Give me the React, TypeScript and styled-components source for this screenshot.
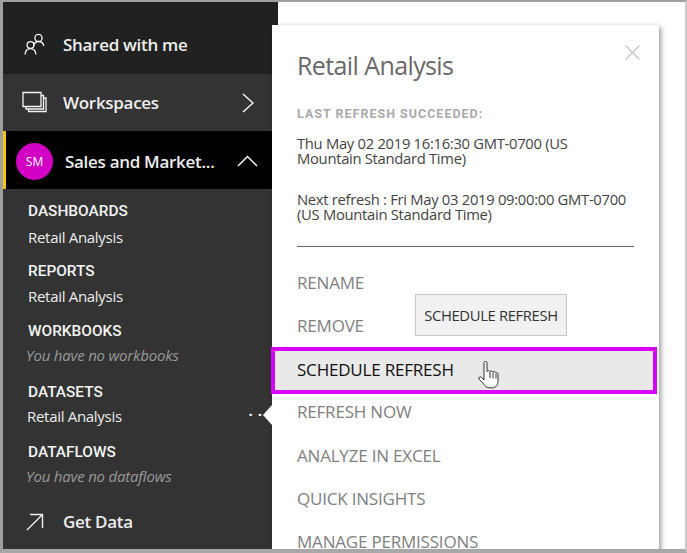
import React from "react";
import styled, { createGlobalStyle } from "styled-components";

const Global = createGlobalStyle`
  html, body { margin: 0; padding: 0; background: #fff; }
  * { box-sizing: border-box; }
  body { font-family: "Open Sans", "Noto Sans", sans-serif; }
`;

const Frame = styled.div`
  position: relative;
  width: 687px;
  height: 553px;
  display: flex;
  overflow: hidden;
  background: #fff;
  border-top: 2px solid #a0a0a0;
  border-left: 3px solid #a0a0a0;
  border-right: 2px solid #c8c8c8;
  border-bottom: 4px solid #a8a8a8;
`;

const Sidebar = styled.nav`
  width: 275px;
  flex: none;
  display: flex;
  flex-direction: column;
  background: #333;
  color: #fff;
`;

const NavRow = styled.div<{ $bg: string; $h: number; $pt?: number }>`
  height: ${(p) => p.$h}px;
  background: ${(p) => p.$bg};
  display: flex;
  align-items: center;
  padding-left: 19px;
  padding-top: ${(p) => p.$pt ?? 0}px;
  flex: none;
`;

const ActiveRow = styled(NavRow)`
  border-left: 3px solid #f2c811;
  padding-left: 10px;
`;

const NavIcon = styled.svg`
  width: 26px;
  height: 26px;
  flex: none;
  margin-right: 15px;
  fill: none;
  stroke: #f4f4f4;
  stroke-width: 1.3;
`;

const NavLabel = styled.span`
  font-size: 17px;
  font-weight: 600;
  color: #eee;
  letter-spacing: -0.3px;
  flex: 1;
`;

const Avatar = styled.span`
  width: 37px;
  height: 37px;
  border-radius: 50%;
  background: #d200c4;
  color: #fff;
  font-size: 12px;
  display: flex;
  align-items: center;
  justify-content: center;
  margin-right: 12px;
  flex: none;
`;

const Chevron = styled.svg<{ $mr: number }>`
  flex: none;
  fill: none;
  stroke: #f4f4f4;
  stroke-width: 1.5;
  margin-right: ${(p) => p.$mr}px;
`;

const Sections = styled.div`
  flex: 1;
  display: flex;
  flex-direction: column;
  padding: 11px 0 0 25px;
`;

const Section = styled.div<{ $h: number }>`
  height: ${(p) => p.$h}px;
  flex: none;
`;

const SectionTitle = styled.div`
  font-family: Roboto, sans-serif;
  font-size: 15.4px;
  font-weight: 500;
  line-height: 22px;
  height: 22px;
  color: #f4f4f4;
`;

const SectionItem = styled.div<{ $shift?: boolean; $mt: number }>`
  font-size: 15px;
  letter-spacing: -0.3px;
  line-height: 20px;
  margin-top: ${(p) => p.$mt}px;
  margin-left: ${(p) => (p.$shift ? "-1px" : "0")};
  color: #ececec;
  display: flex;
  justify-content: space-between;
  padding-right: 11px;
`;

const Empty = styled.div`
  font-size: 15px;
  letter-spacing: -0.2px;
  font-style: italic;
  line-height: 20px;
  margin-top: 3px;
  margin-left: -2px;
  color: #999;
`;

const Dots = styled.span`
  letter-spacing: 5px;
  font-weight: 700;
  line-height: 14px;
  margin-top: 1px;
  color: #fff;
`;

const GetData = styled.div`
  display: flex;
  align-items: center;
  margin-left: -2px;
  margin-top: 9px;
`;

const GetDataLabel = styled.span`
  font-size: 17px;
  font-weight: 600;
  letter-spacing: -0.3px;
  color: #ececec;
  margin-left: 19px;
`;

const Popup = styled.aside`
  position: absolute;
  left: 269px;
  top: 23px;
  width: 387px;
  height: 560px;
  background: #fff;
  box-shadow: 2px 2px 5px rgba(0, 0, 0, 0.4);
  padding: 23px 25px 0;
  display: flex;
  flex-direction: column;
`;

const Notch = styled.span`
  position: absolute;
  left: -9px;
  top: 380px;
  width: 0;
  height: 0;
  border-top: 10px solid transparent;
  border-bottom: 10px solid transparent;
  border-right: 9px solid #fff;
`;

const Close = styled.svg`
  position: absolute;
  right: 19px;
  top: 20px;
  width: 15px;
  height: 15px;
  stroke: #c4c4c4;
  stroke-width: 1.3;
`;

const Title = styled.h2`
  margin: 0;
  font-size: 25px;
  font-weight: 400;
  letter-spacing: -0.6px;
  line-height: 34px;
  color: #686868;
`;

const Status = styled.div`
  margin-top: 24px;
  font-family: Roboto, sans-serif;
  font-size: 12.5px;
  font-weight: 700;
  letter-spacing: 1px;
  line-height: 16px;
  color: #aaa;
`;

const Info = styled.p<{ $top: number }>`
  margin: ${(p) => p.$top}px 0 0;
  font-size: 14.8px;
  letter-spacing: -0.3px;
  line-height: 15px;
  color: #444;
  width: 337px;
`;

const Rule = styled.hr`
  margin: 24px 0 0;
  border: 0;
  width: 337px;
  height: 1px;
  background: #666;
`;

const Menu = styled.ul`
  list-style: none;
  margin: 14px -25px 0;
  padding: 0;
`;

const MenuItem = styled.li`
  height: 43.2px;
  padding-left: 25px;
  display: flex;
  align-items: center;
  font-size: 17px;
  letter-spacing: -0.2px;
  color: #808080;
`;

const SelectedItem = styled(MenuItem)`
  height: 47px;
  margin: 0 2px -4px -1px;
  padding: 0 0 3px 22px;
  border: 4px solid #d800ff;
  background: #e9e9e9;
  color: #111;
`;

const Tooltip = styled.div`
  position: absolute;
  left: 143px;
  top: 269px;
  width: 152px;
  height: 42px;
  background: #f1f1f1;
  border: 1px solid #c8c8c8;
  display: flex;
  align-items: center;
  justify-content: center;
  font-size: 14.8px;
  letter-spacing: -0.35px;
  color: #333;
`;

const Hand = styled.svg`
  position: absolute;
  left: 206px;
  top: 336px;
  width: 22px;
  height: 29px;
`;

export default function App() {
  return (
    <>
      <Global />
      <Frame>
        <Sidebar>
          <NavRow $bg="#212121" $h={72} $pt={12}>
            <NavIcon viewBox="0 0 26 26">
              <circle cx="16.5" cy="7" r="3.6" />
              <path d="M11.500 15c.6-2.800 2.500-4.500 5-4.500s4.800 1.800 5.400 4.400" />
              <circle cx="8.500" cy="14" r="3.400" />
              <path d="M3 23.500c.4-3.400 2.600-5.800 5.500-5.800s5 2.400 5.500 5.800" />
            </NavIcon>
            <NavLabel>Shared with me</NavLabel>
          </NavRow>
          <NavRow $bg="#333" $h={57}>
            <NavIcon viewBox="0 0 26 26">
              <path d="M1 2.500h18v14H1z" />
              <path d="M19 5.500h2.500v13.500H4v-2.500" />
              <path d="M21.500 8H24v13.500H6.500V19" />
            </NavIcon>
            <NavLabel>Workspaces</NavLabel>
            <Chevron $mr={24} width="12" height="20" viewBox="0 0 12 20">
              <path d="M1 1l10 9-10 9" />
            </Chevron>
          </NavRow>
          <ActiveRow $bg="#000" $h={58} $pt={2}>
            <Avatar>SM</Avatar>
            <NavLabel>Sales and Market...</NavLabel>
            <Chevron $mr={20} width="21" height="12" viewBox="0 0 21 12">
              <path d="M1 11l9.500-9.500L20 11" />
            </Chevron>
          </ActiveRow>
          <Sections>
            <Section $h={60}>
              <SectionTitle>DASHBOARDS</SectionTitle>
              <SectionItem $mt={5}>Retail Analysis</SectionItem>
            </Section>
            <Section $h={60}>
              <SectionTitle>REPORTS</SectionTitle>
              <SectionItem $mt={4}>Retail Analysis</SectionItem>
            </Section>
            <Section $h={61}>
              <SectionTitle>WORKBOOKS</SectionTitle>
              <Empty>You have no workbooks</Empty>
            </Section>
            <Section $h={60}>
              <SectionTitle>DATASETS</SectionTitle>
              <SectionItem $shift $mt={3}>
                Retail Analysis
                <Dots>··</Dots>
              </SectionItem>
            </Section>
            <Section $h={60}>
              <SectionTitle>DATAFLOWS</SectionTitle>
              <Empty>You have no dataflows</Empty>
            </Section>
            <GetData>
              <svg width="18" height="18" viewBox="0 0 18 18" fill="none" stroke="#f0f0f0" strokeWidth="1.4">
                <path d="M1 17L16.500 1.500M4 1.500h12.500V15" />
              </svg>
              <GetDataLabel>Get Data</GetDataLabel>
            </GetData>
          </Sections>
        </Sidebar>
        <Popup>
          <Notch />
          <Close viewBox="0 0 15 15">
            <path d="M.5.500l14 14M14.500.500l-14 14" />
          </Close>
          <Title>Retail Analysis</Title>
          <Status>LAST REFRESH SUCCEEDED:</Status>
          <Info $top={14}>Thu May 02 2019 16:16:30 GMT-0700 (US Mountain Standard Time)</Info>
          <Info $top={26}>Next refresh : Fri May 03 2019 09:00:00 GMT-0700 (US Mountain Standard Time)</Info>
          <Rule />
          <Menu>
            <MenuItem>RENAME</MenuItem>
            <MenuItem>REMOVE</MenuItem>
            <SelectedItem>SCHEDULE REFRESH</SelectedItem>
            <MenuItem>REFRESH NOW</MenuItem>
            <MenuItem>ANALYZE IN EXCEL</MenuItem>
            <MenuItem>QUICK INSIGHTS</MenuItem>
            <MenuItem>MANAGE PERMISSIONS</MenuItem>
          </Menu>
          <Tooltip>SCHEDULE REFRESH</Tooltip>
          <Hand viewBox="1 1 21 29">
            <path
              d="M6.500 2.500c0-1.600 3-1.600 3 0v9c1-1 2.500-1 3 0 1-.8 2.500-.6 3 .5 1-.6 2.500-.4 3 .7 1-.3 2 .4 2 1.600v7c0 3.500-2 6.500-5.500 6.500h-3.500c-2.500 0-4-1.500-5-3.500L1.500 19c-.8-1.600 1-3 2.400-1.800L6.500 20z"
              fill="#fff"
              stroke="#333"
              strokeWidth="1"
            />
            <path d="M12.500 12v6M15.500 12.500v6M18.500 13.500v5" stroke="#333" strokeWidth="1" fill="none" />
          </Hand>
        </Popup>
      </Frame>
    </>
  );
}
